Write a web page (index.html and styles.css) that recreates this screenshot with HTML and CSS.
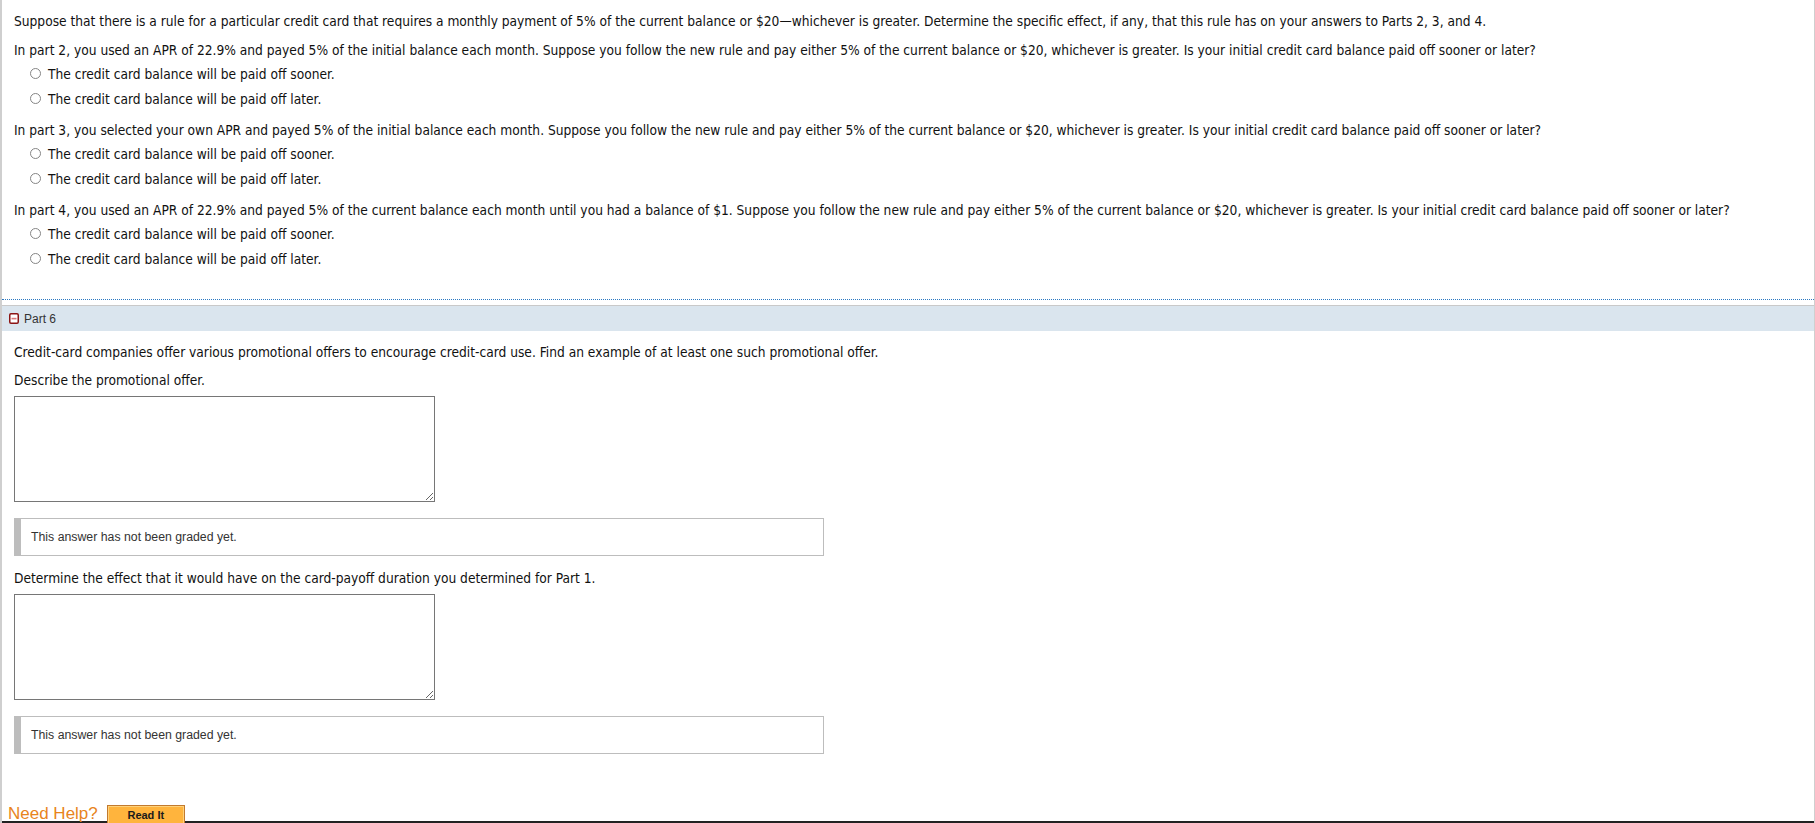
FILE: index.html
```html
<!DOCTYPE html>
<html lang="en">
<head>
<meta charset="utf-8">
<title>Credit card question</title>
<link rel="stylesheet" href="styles.css">
</head>
<body>
<div class="page">
  <section class="part part-5">
    <p class="q">Suppose that there is a rule for a particular credit card that requires a monthly payment of 5% of the current balance or $20—whichever is greater. Determine the specific effect, if any, that this rule has on your answers to Parts 2, 3, and 4.</p>
    <p class="q">In part 2, you used an APR of 22.9% and payed 5% of the initial balance each month. Suppose you follow the new rule and pay either 5% of the current balance or $20, whichever is greater. Is your initial credit card balance paid off sooner or later?</p>
    <ul class="choices">
      <li><label><input type="radio" name="p2"><span>The credit card balance will be paid off sooner.</span></label></li>
      <li><label><input type="radio" name="p2"><span>The credit card balance will be paid off later.</span></label></li>
    </ul>
    <p class="q">In part 3, you selected your own APR and payed 5% of the initial balance each month. Suppose you follow the new rule and pay either 5% of the current balance or $20, whichever is greater. Is your initial credit card balance paid off sooner or later?</p>
    <ul class="choices">
      <li><label><input type="radio" name="p3"><span>The credit card balance will be paid off sooner.</span></label></li>
      <li><label><input type="radio" name="p3"><span>The credit card balance will be paid off later.</span></label></li>
    </ul>
    <p class="q">In part 4, you used an APR of 22.9% and payed 5% of the current balance each month until you had a balance of $1. Suppose you follow the new rule and pay either 5% of the current balance or $20, whichever is greater. Is your initial credit card balance paid off sooner or later?</p>
    <ul class="choices">
      <li><label><input type="radio" name="p4"><span>The credit card balance will be paid off sooner.</span></label></li>
      <li><label><input type="radio" name="p4"><span>The credit card balance will be paid off later.</span></label></li>
    </ul>
  </section>

  <div class="part-header">
    <svg class="collapse-icon" width="10" height="11" viewBox="0 0 10 11" aria-hidden="true">
      <rect x="0.75" y="0.75" width="8.5" height="9.5" rx="1.2" fill="#fff" stroke="#8c1515" stroke-width="1.5"/>
      <rect x="2.5" y="4.8" width="5" height="1.6" fill="#d9777a"/>
    </svg>
    <span class="part-title">Part 6</span>
  </div>

  <section class="part part-6">
    <p class="q">Credit-card companies offer various promotional offers to encourage credit-card use. Find an example of at least one such promotional offer.</p>
    <p class="q">Describe the promotional offer.</p>
    <textarea class="answer"></textarea>
    <div class="grade">This answer has not been graded yet.</div>
    <p class="q">Determine the effect that it would have on the card-payoff duration you determined for Part 1.</p>
    <textarea class="answer"></textarea>
    <div class="grade">This answer has not been graded yet.</div>

    <div class="help">
      <span class="help-label">Need Help?</span>
      <button class="read-it" type="button">Read It</button>
    </div>
  </section>
  <div class="footer-bar"></div>
</div>
</body>
</html>
```

FILE: styles.css
```css
html, body {
  margin: 0;
  padding: 0;
  background: #fff;
}

body {
  font-family: "DejaVu Sans Condensed", "DejaVu Sans", sans-serif;
  font-size: 13.65px;
  color: #111;
}

.page {
  border-left: 2px solid #cfcfcf;
  border-right: 1px solid #cfcfcf;
  width: 1812px;
  box-sizing: content-box;
}

.part {
  padding: 0 12px;
}

.part-5 {
  padding-top: 13px;
  padding-bottom: 28px;
  border-bottom: 1px dotted #2b78c2;
}

.q {
  margin: 0 0 13px 0;
  line-height: 16px;
}

.choices {
  list-style: none;
  margin: -10px 0 11px 0;
  padding: 0;
}

.choices:last-child {
  margin-bottom: 0;
}

.choices li {
  height: 25px;
  display: flex;
  align-items: center;
}

.choices label {
  display: flex;
  align-items: center;
}

.choices input {
  appearance: none;
  -webkit-appearance: none;
  width: 11px;
  height: 11px;
  margin: 0 7px 0 16px;
  border: 1px solid #858585;
  border-radius: 50%;
  background: #fff;
  box-sizing: border-box;
}

.part-header {
  margin-top: 5px;
  border-top: 1px solid #c9c9c9;
  background: #dae5ee;
  height: 25px;
  display: flex;
  align-items: center;
  padding-left: 7px;
  gap: 5px;
}

.collapse-icon {
  display: block;
}

.part-title {
  font-family: "Liberation Sans", Arial, sans-serif;
  font-size: 12px;
  color: #333;
}

.part-6 {
  padding-top: 13px;
}

.part-6 .q {
  margin-bottom: 12px;
}

.answer {
  display: block;
  width: 421px;
  height: 106px;
  box-sizing: border-box;
  border: 1px solid #767676;
  margin: -4px 0 16px 0;
  padding: 2px;
  resize: both;
  font-family: inherit;
}

.grade {
  width: 810px;
  height: 38px;
  box-sizing: border-box;
  border: 1px solid #bdbdbd;
  border-left: 7px solid #bdbdbd;
  padding-left: 10px;
  display: flex;
  align-items: center;
  font-family: "Liberation Sans", Arial, sans-serif;
  font-size: 12.3px;
  color: #333;
  margin-bottom: 14px;
}

.help {
  margin-top: 51px;
  margin-left: -6px;
  height: 16px;
  display: flex;
  align-items: flex-start;
  gap: 9px;
}

.help-label {
  font-family: "Liberation Sans", Arial, sans-serif;
  font-size: 17px;
  color: #e8841c;
  line-height: 18px;
}

.read-it {
  width: 78px;
  height: 20px;
  background: #ffb43d;
  border: 1px solid #c27a2e;
  box-shadow: inset 0 0 0 1px #ffd17a;
  font-family: "Liberation Sans", Arial, sans-serif;
  font-weight: bold;
  font-size: 11px;
  color: #1a1a1a;
  padding: 0;
}

.footer-bar {
  height: 3px;
  background: #222;
}
```
